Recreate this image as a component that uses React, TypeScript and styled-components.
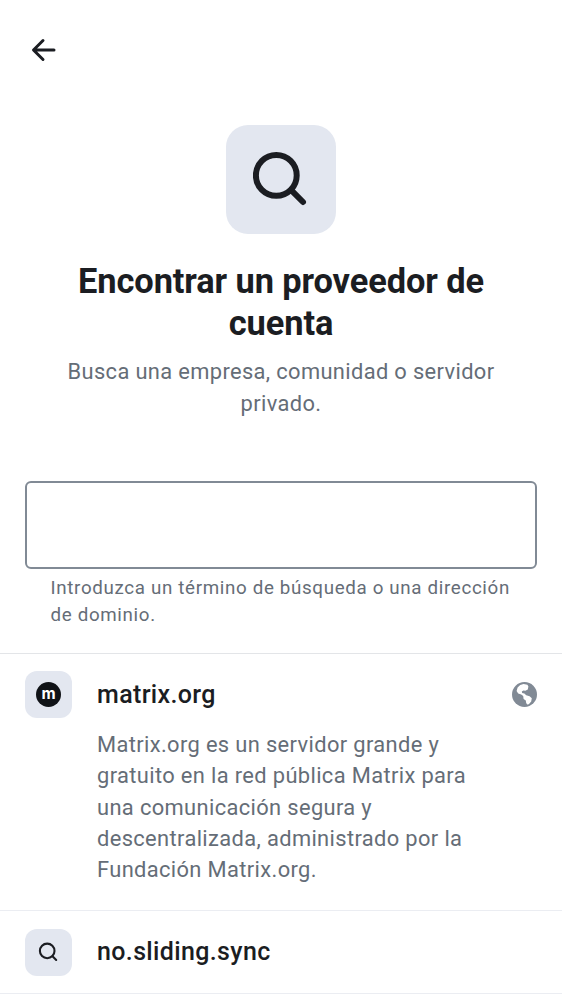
import React from "react";
import styled, { createGlobalStyle } from "styled-components";

const Global = createGlobalStyle`
  * { box-sizing: border-box; }
  body { margin: 0; background: #fff; font-family: Roboto, sans-serif; color: #1b1d22; overflow: hidden; }
  h1, h2, p { margin: 0; }
`;
const Page = styled.main`
  width: 562px; height: 1000px; overflow: hidden; display: flex; flex-direction: column; background: #fff;
`;
const TopBar = styled.header`
  height: 125px; flex: none; padding: 34px 28px;
`;
const BackButton = styled.button`
  display: flex; border: 0; padding: 0; background: none; color: #1b1d22;
`;
const Hero = styled.section`
  height: 356px; flex: none; display: flex; flex-direction: column; align-items: center; text-align: center;
`;
const HeroTile = styled.div`
  width: 110px; height: 109px; flex: none; border-radius: 22px; background: #e3e7f0;
  display: flex; align-items: center; justify-content: center;
`;
const Title = styled.h1`
  margin-top: 26px; width: 440px; font: 700 34.4px/42px Roboto, sans-serif; letter-spacing: -0.1px;
`;
const Subtitle = styled.p`
  margin-top: 12.4px; width: 450px; font-size: 21.875px; line-height: 31.25px; letter-spacing: 0.36px; color: #656d77;
`;
const Field = styled.div`
  flex: none; padding: 0 25px; height: 172px;
`;
const Input = styled.input`
  display: block; width: 512px; height: 88px; border: 2px solid #818a95; border-radius: 6px; background: #fff; padding: 0 24px; font-size: 24px; outline: 0;
`;
const Hint = styled.p`
  margin: 6px 0 0 25.5px; width: 470px; font-size: 18.75px; line-height: 26.5px; letter-spacing: 0.66px; color: #656d77;
`;
const Item = styled.article<{ $height: number; $line?: string; $top?: number }>`
  flex: none; height: ${p => p.$height}px; border-top: 1px solid ${p => p.$line ?? "#e3e5e8"}; padding: ${p => p.$top ?? 17}px 25px 0;
`;
const ItemHead = styled.div`
  display: flex; align-items: center; height: 47px;
`;
const Tile = styled.div`
  width: 47px; height: 47px; border-radius: 12px; background: #e3e7f0; display: flex; align-items: center; justify-content: center;
`;
const Name = styled.h2`
  flex: 1; margin-left: 25px; font-size: 25px; line-height: 34px; font-weight: 500; letter-spacing: 0.36px;
`;
const Description = styled.p`
  margin: 11px 0 0 72px; width: 380px; font-size: 21.875px; line-height: 31.25px; letter-spacing: 0.37px; color: #656d77;
`;
const Badge = styled.span`
  width: 25px; height: 25px; border-radius: 50%; background: #101317; color: #fff; display: flex; align-items: center; justify-content: center;
  font: 700 15.5px/20px Inter, sans-serif; padding-bottom: 2px;
`;

const HeroSearchIcon = () => (
  <svg width="56" height="56" viewBox="0 0 56 56" fill="none" stroke="currentColor" strokeLinecap="round">
    <circle cx="23.3" cy="23.4" r="20.4" strokeWidth="6" />
    <path d="m38.2 38.2 11.8 11.8" strokeWidth="6" />
  </svg>
);
const SearchIcon = () => (
  <svg width="25" height="25" viewBox="0 0 25 25" fill="none" stroke="currentColor" strokeWidth="2.1" strokeLinecap="round">
    <circle cx="11.2" cy="10.9" r="7.3" />
    <path d="m16.5 16.2 3.7 3.7" />
  </svg>
);
const BackIcon = () => (
  <svg width="32" height="32" viewBox="0 0 32 32" fill="none" stroke="currentColor" strokeWidth="3" strokeLinecap="round" strokeLinejoin="round">
    <path d="M26 16H6M15 6.5 5.5 16 15 25.5" />
  </svg>
);
const GlobeIcon = () => (
  <svg width="25" height="25" viewBox="0 0 25 25">
    <circle cx="12.5" cy="12.5" r="12.5" fill="#818a95" />
    <path fill="#fff" d="M4.6 9 5.6 5.6 8.2 3 11.6 2 15.4 2.8 16.4 4.6 15.8 7.4 13.4 8.8 11.4 8.6 9.8 9.6 10.2 11 12.4 11.4 14.2 13.2 17.6 14.2 19.8 16.2 19.2 19.4 16.8 22.2 15.2 22.6 14.2 21 13.8 18.6 11.6 17 11.2 14 9.2 12.4 6.2 11.4Z" />
  </svg>
);

export default function App() {
  return (
    <>
      <Global />
      <Page>
        <TopBar><BackButton aria-label="Atrás"><BackIcon /></BackButton></TopBar>
        <Hero>
          <HeroTile><HeroSearchIcon /></HeroTile>
          <Title>Encontrar un proveedor de cuenta</Title>
          <Subtitle>Busca una empresa, comunidad o servidor privado.</Subtitle>
        </Hero>
        <Field>
          <Input />
          <Hint>Introduzca un término de búsqueda o una dirección de dominio.</Hint>
        </Field>
        <Item $height={257}>
          <ItemHead><Tile><Badge>m</Badge></Tile><Name>matrix.org</Name><GlobeIcon /></ItemHead>
          <Description>Matrix.org es un servidor grande y gratuito en la red pública Matrix para una comunicación segura y descentralizada, administrado por la Fundación Matrix.org.</Description>
        </Item>
        <Item $height={83} $line="#ebedf2" $top={17.5}>
          <ItemHead><Tile><SearchIcon /></Tile><Name>no.sliding.sync</Name></ItemHead>
        </Item>
        <Item $height={10} $line="#ebedf2" />
      </Page>
    </>
  );
}
